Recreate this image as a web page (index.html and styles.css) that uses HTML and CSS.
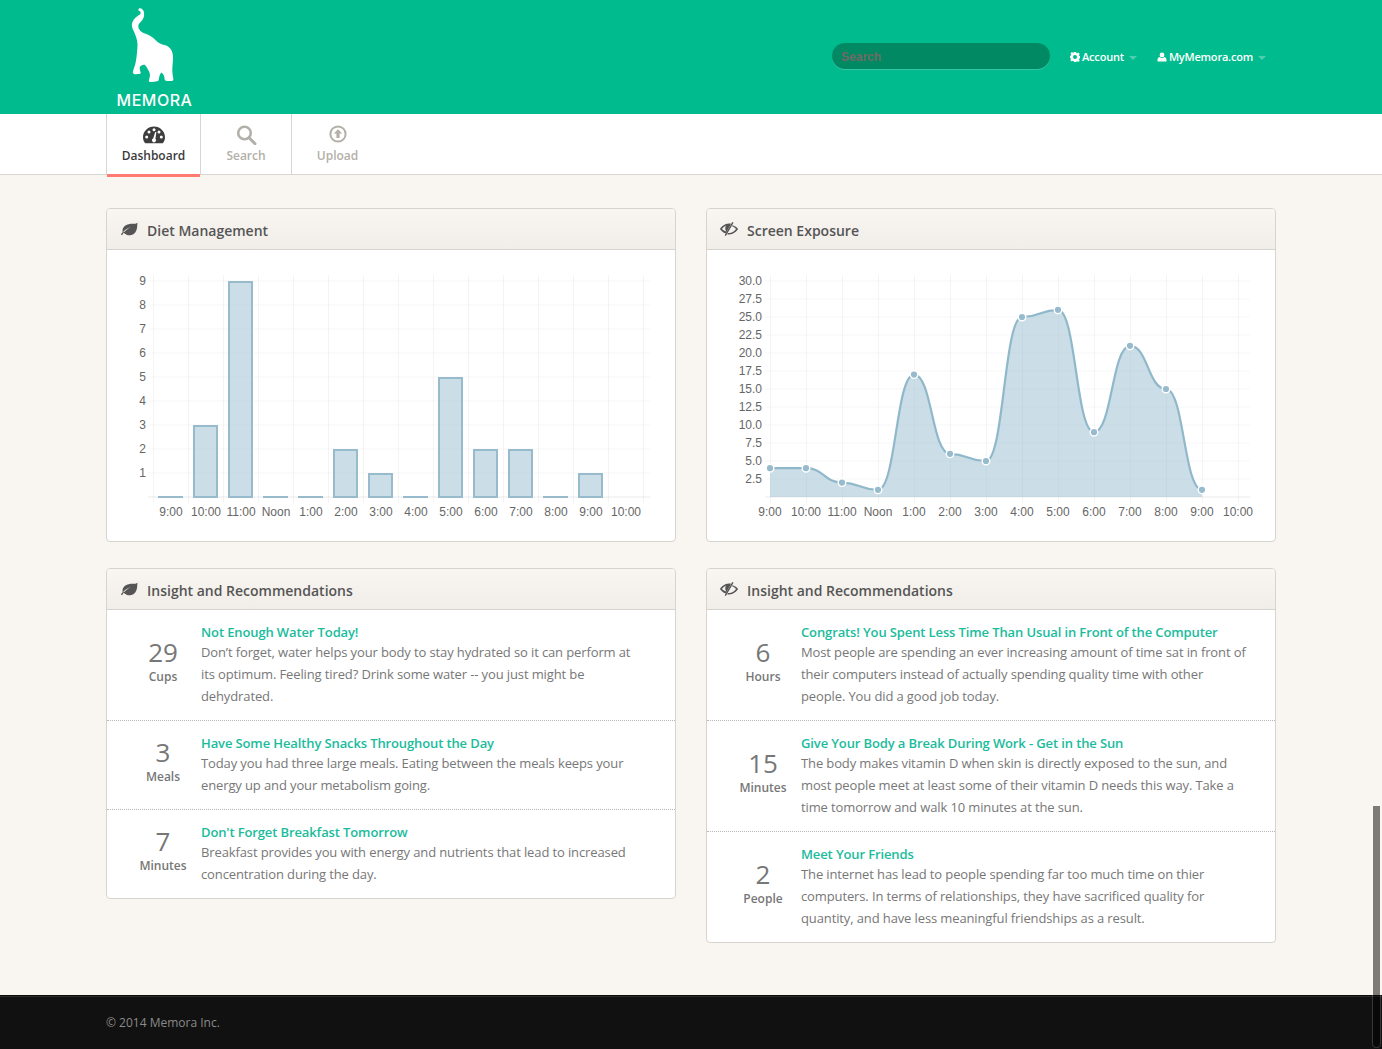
FILE: index.html
```html
<!DOCTYPE html>
<html lang="en">
<head>
<meta charset="utf-8">
<title>Memora Dashboard</title>
<link rel="stylesheet" href="styles.css">
</head>
<body>
<header class="topbar">
  <div class="wrap topbar-inner">
    <a class="brand">
      <svg class="brand-mark" viewBox="110 0 90 90" width="90" height="90"><path d="M139 8.500C141 7.500 143.500 9.500 144 12.500C144.600 16 143.500 19 141.500 21C139.500 23 138.300 24.500 138.300 26C138.300 29.500 141 32 145 33.500C149 35 153 37 156 40.500C158.500 43 161.500 44.500 164.500 45C169 46 172 49.500 172.800 54.500C173.500 60 172.300 65 172.300 70C172.300 74 173.200 77.500 173.400 79.500C173.400 81 171.500 81.300 169 81C166.500 81 164.500 80.800 164.500 79C164.800 76.500 163.500 74 161.300 72.500C159.800 74.500 159 77 158.800 79.500C158.500 81.500 156 81.300 153.500 81.800C151 82.200 148.800 82.200 148.800 80.500C149.500 78 150.300 76 149.800 73.500C149 70.500 146.500 67 144.800 64.800C142.500 64.500 140.500 65.500 139.700 67.500C139.500 69.500 140.500 71.500 140.800 73C140.300 74.300 138.500 74 136.500 74.200C134.500 74.300 133 74 132.800 72.500C133.300 69 135.500 65 136 60.500C136.800 56 137.300 50 137.500 45C137.500 38.500 134.500 33 132.500 28.500C131.500 25.500 131.500 23 133.500 20C135.500 17 138.500 15.500 140 14.500C141 13 140.800 11.500 139.500 11C138.500 11 137.800 9.500 139 8.500Z"/></svg>
      <span class="brand-name">MEMORA</span>
    </a>
    <nav class="topnav">
      <div class="topsearch">Search</div>
      <a class="toplink"><svg class="top-icon" viewBox="0 0 20 20" width="10" height="10"><path fill-rule="evenodd" d="M8 0h4l.6 2.800 1.700.7L16.700 2l2.800 2.800-1.500 2.400.7 1.700 2.800.6v4l-2.800.6-.7 1.700 1.500 2.400-2.800 2.800-2.400-1.500-1.700.7L12 22H8l-.6-2.800-1.700-.7-2.400 1.500L.5 17.200 2 14.800l-.7-1.700L-1 12.500v-4l2.800-.6.7-1.700L1 3.800 3.800 1l2.400 1.500 1.700-.7zM10 7a4 4 0 1 0 0 8 4 4 0 0 0 0-8z" transform="translate(0 -1)"/></svg>Account<span class="caret"></span></a>
      <a class="toplink"><svg class="top-icon" viewBox="0 0 20 20" width="10" height="10"><path d="M10 1a4.800 4.800 0 1 1 0 9.600A4.800 4.800 0 0 1 10 1zM1 19v-3c0-3.500 2-5.500 4.500-6 1.200 1.100 2.800 1.800 4.500 1.800s3.300-.7 4.500-1.800c2.500.5 4.500 2.500 4.500 6v3z"/></svg>MyMemora.com<span class="caret"></span></a>
    </nav>
  </div>
</header>

<div class="tabbar">
  <div class="wrap tabs">
    <a class="tab tab-active">
      <svg class="tab-icon" viewBox="0 0 22 17" width="22" height="17"><path fill="#3d3d3d" d="M11 0C5 0 0 4.800 0 10.800c0 2.200.7 4.300 2 5.700.2.200.5.300.8.300h16.400c.3 0 .6-.1.800-.3 1.300-1.400 2-3.500 2-5.700C22 4.800 17 0 11 0z"/><g fill="#fff"><circle cx="3.700" cy="10.500" r="1.500"/><circle cx="6" cy="5.500" r="1.500"/><circle cx="11" cy="3.300" r="1.500"/><circle cx="16" cy="5.500" r="1.500"/><circle cx="18.300" cy="10.500" r="1.500"/><path d="M13.400 5.800l-1 6.500a2 2 0 1 1-2.200-.3l2-6.500z"/></g></svg>
      <span>Dashboard</span>
    </a>
    <a class="tab">
      <svg class="tab-icon" viewBox="0 0 22 20" width="22" height="20"><circle class="tab-line" cx="9.500" cy="8" r="6.300"/><path class="tab-line tab-handle" d="M14 12.700l6 6"/></svg>
      <span>Search</span>
    </a>
    <a class="tab tab-last">
      <svg class="tab-icon tab-icon-up" viewBox="0 0 20 20" width="20" height="20"><circle class="tab-line tab-ring" cx="10" cy="9" r="7.600"/><path class="tab-fill" d="M10 4.200l4.200 4.300h-2.600V13H8.400V8.500H5.800z"/></svg>
      <span>Upload</span>
    </a>
  </div>
</div>

<main class="wrap page">
  <div class="col">
    <section class="panel">
      <h2 class="panel-head"><svg class="head-icon" viewBox="0 0 18 14" width="18" height="14"><path d="M17.500.5c-1 1.300-2.800 1.300-5 1.300C7 1.800 2.500 4 2.500 9c0 .5.100 1 .3 1.500C4.500 8 7.500 6.200 11 5.300c-3 1.200-6.500 3.300-8.600 7.500-.2.500-1 .5-1.200-.1-.1-.4.100-.7.300-1.100.5-.8 1-1.400 1.500-1.900C6 13.500 9 13.800 11.500 13 15 12 16.500 9 17 6c.3-2 .3-4 .5-5.500z"/></svg>Diet Management</h2>
      <svg class="chart" viewBox="107 250 568 291" width="568" height="291">
        <g class="grid">
          <path class="grid-h" d="M148 281H650M148 305H650M148 329H650M148 353H650M148 377H650M148 401H650M148 425H650M148 449H650M148 473H650"/>
          <path d="M153.500 275V503M188.500 275V503M223.500 275V503M258.500 275V503M293.500 275V503M328.500 275V503M363.500 275V503M398.500 275V503M433.500 275V503M468.500 275V503M503.500 275V503M538.500 275V503M573.500 275V503M608.500 275V503M643.500 275V503"/>
        </g>
        <path class="axis" d="M148 497H650"/>
        <g class="bars">
          <rect x="194" y="426" width="23" height="71"/>
          <rect x="229" y="282" width="23" height="215"/>
          <rect x="334" y="450" width="23" height="47"/>
          <rect x="369" y="474" width="23" height="23"/>
          <rect x="439" y="378" width="23" height="119"/>
          <rect x="474" y="450" width="23" height="47"/>
          <rect x="509" y="450" width="23" height="47"/>
          <rect x="579" y="474" width="23" height="23"/>
          <path d="M158 497H183M263 497H288M298 497H323M403 497H428M543 497H568"/>
        </g>
        <g class="labels ylab-left">
          <text x="146" y="285">9</text><text x="146" y="309">8</text><text x="146" y="333">7</text><text x="146" y="357">6</text><text x="146" y="381">5</text><text x="146" y="405">4</text><text x="146" y="429">3</text><text x="146" y="453">2</text><text x="146" y="477">1</text>
        </g>
        <g class="labels xlab">
          <text x="171" y="516">9:00</text><text x="206" y="516">10:00</text><text x="241" y="516">11:00</text><text x="276" y="516">Noon</text><text x="311" y="516">1:00</text><text x="346" y="516">2:00</text><text x="381" y="516">3:00</text><text x="416" y="516">4:00</text><text x="451" y="516">5:00</text><text x="486" y="516">6:00</text><text x="521" y="516">7:00</text><text x="556" y="516">8:00</text><text x="591" y="516">9:00</text><text x="626" y="516">10:00</text>
        </g>
      </svg>
    </section>

    <section class="panel">
      <h2 class="panel-head"><svg class="head-icon" viewBox="0 0 18 14" width="18" height="14"><path d="M17.500.5c-1 1.300-2.800 1.300-5 1.300C7 1.800 2.500 4 2.500 9c0 .5.100 1 .3 1.500C4.500 8 7.500 6.200 11 5.300c-3 1.200-6.500 3.300-8.600 7.500-.2.500-1 .5-1.200-.1-.1-.4.100-.7.300-1.100.5-.8 1-1.400 1.500-1.900C6 13.500 9 13.800 11.500 13 15 12 16.500 9 17 6c.3-2 .3-4 .5-5.500z"/></svg>Insight and Recommendations</h2>
      <article class="item">
        <div class="stat"><b>29</b><span>Cups</span></div>
        <div class="copy"><h3>Not Enough Water Today!</h3><p>Don’t forget, water helps your body to stay hydrated so it can perform at its optimum. Feeling tired? Drink some water -- you just might be dehydrated.</p></div>
      </article>
      <article class="item">
        <div class="stat"><b>3</b><span>Meals</span></div>
        <div class="copy"><h3>Have Some Healthy Snacks Throughout the Day</h3><p>Today you had three large meals. Eating between the meals keeps your energy up and your metabolism going.</p></div>
      </article>
      <article class="item">
        <div class="stat"><b>7</b><span>Minutes</span></div>
        <div class="copy"><h3>Don't Forget Breakfast Tomorrow</h3><p>Breakfast provides you with energy and nutrients that lead to increased concentration during the day.</p></div>
      </article>
    </section>
  </div>

  <div class="col">
    <section class="panel">
      <h2 class="panel-head"><svg class="head-icon" viewBox="0 0 18 14" width="18" height="14"><path fill-rule="evenodd" d="M11 1.700C10.300 1.600 9.700 1.500 9 1.500C4.500 1.500 1.300 4.700 0 7C1 8.600 3 10.500 5.800 11.600zM2 7C2.800 5.500 4.500 4.200 6 3.500C5 5 5 8 6.400 9.600C4.500 9 3 8.200 2 7z"/><path d="M12.300 0l1.200.7L5.900 14l-1.200-.7zM12.600 3.300C15 4 17 5.500 18 7C16.700 9.300 13.500 12.500 9 12.500C8.300 12.500 7.700 12.400 7.200 12.300L8.200 10.900C8.500 11 8.700 11 9 11C12 11 14.800 9 16 7C15.300 6 14 4.900 12 4.300z"/></svg>Screen Exposure</h2>
      <svg class="chart" viewBox="707 250 568 291" width="568" height="291">
        <g class="grid">
          <path class="grid-h" d="M765 281H1250M765 299H1250M765 317H1250M765 335H1250M765 353H1250M765 371H1250M765 389H1250M765 407H1250M765 425H1250M765 443H1250M765 461H1250M765 479H1250"/>
          <path d="M770.500 275V503M806.500 275V503M842.500 275V503M878.500 275V503M914.500 275V503M950.500 275V503M986.500 275V503M1022.500 275V503M1058.500 275V503M1094.500 275V503M1130.500 275V503M1166.500 275V503M1202.500 275V503M1238.500 275V503"/>
        </g>
        <path class="axis" d="M765 497H1250"/>
        <path class="area" d="M770 468.200C788 468.200 788 468.200 806 468.200C824 468.200 824 482.600 842 482.600C860 482.600 860 489.800 878 489.800C896 489.800 896 374.600 914 374.600C932 374.600 932 453.800 950 453.800C968 453.800 968 461 986 461C1004 461 1004 317 1022 317C1040 317 1040 309.800 1058 309.800C1076 309.800 1076 432.200 1094 432.200C1112 432.200 1112 345.800 1130 345.800C1148 345.800 1148 389 1166 389C1184 389 1184 489.800 1202 489.800L1202 497L770 497Z"/>
        <path class="curve" d="M770 468.200C788 468.200 788 468.200 806 468.200C824 468.200 824 482.600 842 482.600C860 482.600 860 489.800 878 489.800C896 489.800 896 374.600 914 374.600C932 374.600 932 453.800 950 453.800C968 453.800 968 461 986 461C1004 461 1004 317 1022 317C1040 317 1040 309.800 1058 309.800C1076 309.800 1076 432.200 1094 432.200C1112 432.200 1112 345.800 1130 345.800C1148 345.800 1148 389 1166 389C1184 389 1184 489.800 1202 489.800"/>
        <g class="dots">
          <circle cx="770" cy="468.200" r="3.800"/><circle cx="806" cy="468.200" r="3.800"/><circle cx="842" cy="482.600" r="3.800"/><circle cx="878" cy="489.800" r="3.800"/><circle cx="914" cy="374.600" r="3.800"/><circle cx="950" cy="453.800" r="3.800"/><circle cx="986" cy="461" r="3.800"/><circle cx="1022" cy="317" r="3.800"/><circle cx="1058" cy="309.800" r="3.800"/><circle cx="1094" cy="432.200" r="3.800"/><circle cx="1130" cy="345.800" r="3.800"/><circle cx="1166" cy="389" r="3.800"/><circle cx="1202" cy="489.800" r="3.800"/>
        </g>
        <g class="labels ylab-left">
          <text x="762" y="285">30.0</text><text x="762" y="303">27.5</text><text x="762" y="321">25.0</text><text x="762" y="339">22.5</text><text x="762" y="357">20.0</text><text x="762" y="375">17.5</text><text x="762" y="393">15.0</text><text x="762" y="411">12.5</text><text x="762" y="429">10.0</text><text x="762" y="447">7.5</text><text x="762" y="465">5.0</text><text x="762" y="483">2.5</text>
        </g>
        <g class="labels xlab">
          <text x="770" y="516">9:00</text><text x="806" y="516">10:00</text><text x="842" y="516">11:00</text><text x="878" y="516">Noon</text><text x="914" y="516">1:00</text><text x="950" y="516">2:00</text><text x="986" y="516">3:00</text><text x="1022" y="516">4:00</text><text x="1058" y="516">5:00</text><text x="1094" y="516">6:00</text><text x="1130" y="516">7:00</text><text x="1166" y="516">8:00</text><text x="1202" y="516">9:00</text><text x="1238" y="516">10:00</text>
        </g>
      </svg>
    </section>

    <section class="panel">
      <h2 class="panel-head"><svg class="head-icon" viewBox="0 0 18 14" width="18" height="14"><path fill-rule="evenodd" d="M11 1.700C10.300 1.600 9.700 1.500 9 1.500C4.500 1.500 1.300 4.700 0 7C1 8.600 3 10.500 5.800 11.600zM2 7C2.800 5.500 4.500 4.200 6 3.500C5 5 5 8 6.400 9.600C4.500 9 3 8.200 2 7z"/><path d="M12.300 0l1.200.7L5.900 14l-1.200-.7zM12.600 3.300C15 4 17 5.500 18 7C16.700 9.300 13.500 12.500 9 12.500C8.300 12.500 7.700 12.400 7.200 12.300L8.200 10.900C8.500 11 8.700 11 9 11C12 11 14.800 9 16 7C15.300 6 14 4.900 12 4.300z"/></svg>Insight and Recommendations</h2>
      <article class="item">
        <div class="stat"><b>6</b><span>Hours</span></div>
        <div class="copy"><h3>Congrats! You Spent Less Time Than Usual in Front of the Computer</h3><p>Most people are spending an ever increasing amount of time sat in front of their computers instead of actually spending quality time with other people. You did a good job today.</p></div>
      </article>
      <article class="item">
        <div class="stat"><b>15</b><span>Minutes</span></div>
        <div class="copy"><h3>Give Your Body a Break During Work - Get in the Sun</h3><p>The body makes vitamin D when skin is directly exposed to the sun, and most people meet at least some of their vitamin D needs this way. Take a time tomorrow and walk 10 minutes at the sun.</p></div>
      </article>
      <article class="item">
        <div class="stat"><b>2</b><span>People</span></div>
        <div class="copy"><h3>Meet Your Friends</h3><p>The internet has lead to people spending far too much time on thier computers. In terms of relationships, they have sacrificed quality for quantity, and have less meaningful friendships as a result.</p></div>
      </article>
    </section>
  </div>
</main>

<footer class="foot">
  <div class="wrap">© 2014 Memora Inc.</div>
</footer>
<div class="scroll-thumb"></div>
</body>
</html>
```

FILE: styles.css
```css
* { box-sizing: border-box; }
html, body { margin: 0; padding: 0; }
body {
  background: #f9f6f1;
  color: #777;
  font-family: "Open Sans", sans-serif;
  font-size: 13px;
  overflow: hidden;
  height: 1049px;
}
.wrap { width: 1170px; margin: 0 auto; }

/* top bar */
.topbar { background: #00bb8d; height: 114px; }
.topbar-inner { display: flex; align-items: center; height: 114px; }
.brand { display: flex; flex-direction: column; align-items: center; width: 98px; height: 114px; }
.brand-mark { display: block; fill: #fff; flex: none; }
.brand-name {
  color: #fff;
  font-family: Inter, sans-serif;
  font-weight: 500;
  font-size: 16px;
  letter-spacing: .5px;
  line-height: 21px;
  margin-left: -1px;
}
.topnav { display: flex; align-items: center; margin-left: auto; padding-right: 10px; }
.topsearch {
  width: 218px;
  height: 26px;
  margin: -2px 20px 0 0;
  padding-left: 9px;
  border-radius: 13px;
  background: #008963;
  box-shadow: 0 1px 0 rgba(255,255,255,.2);
  color: #6f6a63;
  font-family: "Liberation Sans", sans-serif;
  font-weight: 700;
  font-size: 12px;
  line-height: 28px;
}
.toplink {
  display: flex;
  align-items: center;
  color: #fff;
  font-size: 11px;
  font-weight: 600;
  letter-spacing: -.2px;
  line-height: 16px;
}
.toplink + .toplink { margin-left: 20px; }
.top-icon { fill: #fff; margin-right: 2px; flex: none; }
.caret {
  width: 0;
  height: 0;
  margin-left: 5px;
  margin-top: 1px;
  border-top: 4px solid rgba(255,255,255,.3);
  border-left: 4px solid transparent;
  border-right: 4px solid transparent;
}

/* tabs */
.tabbar { background: #fff; height: 61px; border-bottom: 1px solid #d8d6d2; }
.tabs { display: flex; height: 60px; border-left: 1px solid #d8d6d2; }
.tab {
  position: relative;
  width: 91px;
  border-right: 1px solid #d8d6d2;
  display: flex;
  flex-direction: column;
  align-items: center;
  color: #b3afa9;
  font-size: 12px;
  font-weight: 600;
  padding-top: 11px;
}
.tab span { line-height: 18px; margin-top: 2px; }
.tab-icon { display: block; height: 20px; flex: none; }
.tab-active { width: 94px; color: #3b3b3b; }
.tab-active::after {
  content: "";
  position: absolute;
  left: 0;
  right: 0;
  top: 60px;
  height: 3px;
  background: #ff7a6f;
}
.tab-last { border-right: 0; }
.tab-line { fill: none; stroke: #b3afa9; stroke-width: 2.6; }
.tab-handle { stroke-linecap: round; stroke-width: 3; }
.tab-ring { stroke-width: 2; }
.tab-fill { fill: #b3afa9; }

/* page */
.page { display: flex; gap: 30px; padding-top: 33px; height: 820px; }
.col { width: 570px; display: flex; flex-direction: column; gap: 26px; align-items: stretch; }
.panel {
  background: #fff;
  border: 1px solid #d6d4cf;
  border-radius: 4px;
  overflow: hidden;
}
.panel-head {
  display: flex;
  align-items: center;
  height: 41px;
  margin: 0;
  padding: 2px 0 0 13px;
  background: linear-gradient(#f9f6f1, #f1eee9);
  border-bottom: 1px solid #d6d4cf;
  color: #555;
  font-size: 14px;
  font-weight: 600;
}
.head-icon { fill: #555; margin: -2px 9px 0 0; flex: none; }
.chart { display: block; }

/* chart parts */
.grid path { fill: none; stroke: rgba(0,0,0,.045); stroke-width: 1; }
.grid .grid-h { stroke: rgba(0,0,0,.035); }
.axis { fill: none; stroke: rgba(0,0,0,.08); stroke-width: 1; }
.bars rect { fill: rgba(151,187,205,.5); stroke: #97bbcd; stroke-width: 2; }
.bars path { fill: none; stroke: #97bbcd; stroke-width: 2; }
.labels text { font-family: "Liberation Sans", sans-serif; font-size: 12px; fill: #666; }
.ylab-left text { text-anchor: end; }
.xlab text { text-anchor: middle; }
.area { fill: rgba(151,187,205,.5); }
.curve { fill: none; stroke: #90b8cb; stroke-width: 2.2; }
.dots circle { fill: #97bbcd; stroke: #fff; stroke-width: 1.4; }

/* insights */
.item {
  display: flex;
  padding: 12px 28.5px 13px 24px;
  border-bottom: 1px dotted #b9b7b3;
}
.item:last-child { border-bottom: 0; }
.stat { width: 64px; margin-right: 6px; flex: none; text-align: center; align-self: center; padding-bottom: 2px; }
.stat b { display: block; font-weight: 400; font-size: 26px; line-height: 24px; color: #777; }
.stat span { display: block; font-size: 12px; font-weight: 600; line-height: 20px; margin-top: 3px; color: #777; white-space: nowrap; }
.copy { flex: 1; min-width: 0; }
.copy h3 { margin: 0; padding-top: 1px; color: #1abc9c; font-size: 13px; font-weight: 600; letter-spacing: -.12px; line-height: 18px; }
.copy p { margin: 0; color: #777; font-size: 13px; letter-spacing: -.12px; line-height: 22px; }

/* footer */
.foot {
  height: 54px;
  background: #111;
  border-top: 1px solid #0a0a0a;
  box-shadow: inset 0 1px 0 #2c2c2c;
  color: #8a8a8a;
  font-size: 12px;
  line-height: 53px;
}
.scroll-thumb {
  position: fixed;
  top: 806px;
  right: 1px;
  width: 9px;
  height: 242px;
  background: rgba(0,0,0,.5);
  background-clip: padding-box;
  border: 1px solid rgba(255,255,255,.16);
  border-top: 0;
  border-radius: 0 0 5px 5px;
}
```
